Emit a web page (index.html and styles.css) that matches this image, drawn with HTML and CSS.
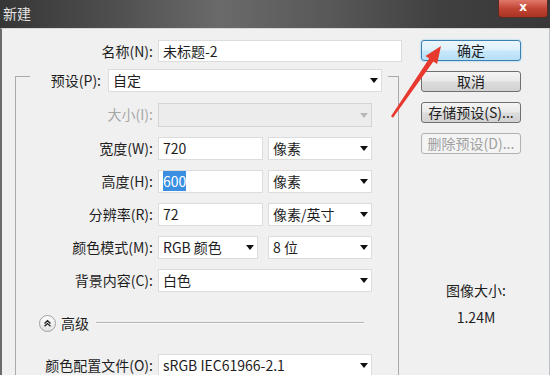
FILE: index.html
```html
<!DOCTYPE html>
<html lang="zh-CN">
<head>
    <meta charset="UTF-8">
    <title>新建</title>
    <link rel="stylesheet" href="styles.css">
</head>
<body>
    <div class="window">
        <div class="titlebar">
            <span class="title">新建</span>
            <div class="close-btn">x</div>
        </div>

        <div class="content">
            <div class="form">
                <div class="name-row">
                    <label>名称(N):</label>
                    <div class="field">未标题-2</div>
                </div>

                <div class="group">
                    <div class="preset-row">
                        <label>预设(P):</label>
                        <div class="select wide">自定<span class="caret"></span></div>
                    </div>

                    <div class="group-grid">
                        <label class="disabled">大小(I):</label>
                        <div class="select span disabled-box tall"><span></span><span class="caret light"></span></div>

                        <label>宽度(W):</label>
                        <div class="field">720</div>
                        <div class="select">像素<span class="caret"></span></div>

                        <label>高度(H):</label>
                        <div class="field"><span class="selected">600</span></div>
                        <div class="select">像素<span class="caret"></span></div>

                        <label>分辨率(R):</label>
                        <div class="field">72</div>
                        <div class="select">像素/英寸<span class="caret"></span></div>

                        <label>颜色模式(M):</label>
                        <div class="select narrow">RGB 颜色<span class="caret"></span></div>
                        <div class="select">8 位<span class="caret"></span></div>

                        <label>背景内容(C):</label>
                        <div class="select span">白色<span class="caret"></span></div>

                        <div class="advanced">
                            <span class="adv-icon">
                                <svg width="15" height="15" viewBox="0 0 15 15">
                                    <path d="M4.5 7.5 L7.5 4.8 L10.5 7.5 M4.5 10.3 L7.5 7.6 L10.5 10.3" fill="none" stroke="#222" stroke-width="1.4"/>
                                </svg>
                            </span>
                            <span class="adv-text">高级</span>
                            <span class="adv-line"></span>
                        </div>

                        <label>颜色配置文件(O):</label>
                        <div class="select span">sRGB IEC61966-2.1<span class="caret"></span></div>
                    </div>
                </div>
            </div>

            <div class="side">
                <div class="btn primary">确定</div>
                <div class="btn">取消</div>
                <div class="btn">存储预设(S)...</div>
                <div class="btn disabled">删除预设(D)...</div>

                <div class="info">
                    <div>图像大小:</div>
                    <div class="info-value">1.24M</div>
                </div>
            </div>
        </div>

        <svg class="arrow" width="550" height="375" viewBox="0 0 550 375">
            <polygon points="391.0,116.3 429.2,58.6 425.5,56.0 441,46 437.1,64.0 433.4,61.4 393.0,117.7" fill="#e8392f"/>
        </svg>
    </div>
</body>
</html>
```

FILE: styles.css
```css
body {
    margin: 0;
    padding: 0;
    font-family: "Noto Sans CJK SC", "Liberation Sans", sans-serif;
    font-size: 14px;
    color: #1e1e1e;
    overflow: hidden;
}

.window {
    position: relative;
    width: 550px;
    height: 375px;
    overflow: hidden;
}

.titlebar {
    height: 28px;
    display: flex;
    justify-content: space-between;
    align-items: flex-start;
    background: linear-gradient(90deg, #363636 0%, #4e4e4e 20%, #6a6a6a 40%, #585858 60%, #404040 80%, #383838 100%);
}

.title {
    color: #e4e4e4;
    line-height: 26px;
    padding-left: 3px;
}

.close-btn {
    width: 48px;
    height: 17px;
    margin-right: 2px;
    border: 1px solid #5a2a24;
    border-top: none;
    border-radius: 0 0 4px 4px;
    background: linear-gradient(#e0796b, #c24534 50%, #a93323);
    color: #fff;
    font-family: "DejaVu Sans", sans-serif;
    font-weight: bold;
    font-size: 12px;
    line-height: 14px;
    text-align: center;
}

.content {
    display: flex;
    height: 347px;
    background-color: #f0f0f0;
    border-left: 2px solid #6b6b6b;
    border-right: 1px solid #b9c2ca;
    border-top: 1px solid #d8d8d8;
    box-sizing: border-box;
}

.form {
    width: 408px;
    flex-shrink: 0;
}

label {
    text-align: right;
    line-height: 23px;
    white-space: nowrap;
}

label.disabled {
    color: #a8a8a8;
}

.name-row {
    display: grid;
    grid-template-columns: 151px 244px;
    column-gap: 5px;
    margin-top: 11px;
}

.field, .select {
    height: 23px;
    box-sizing: border-box;
    background-color: #fff;
    border: 1px solid #dcdcdc;
    padding-left: 4px;
    line-height: 21px;
    white-space: nowrap;
}

.name-row .field {
    height: 22px;
}

.select {
    display: flex;
    justify-content: space-between;
    align-items: center;
    padding-right: 3px;
}

.caret {
    width: 0;
    height: 0;
    border-top: 5px solid #111;
    border-left: 4px solid transparent;
    border-right: 4px solid transparent;
}

.caret.light {
    border-top-color: #b8b8b8;
}

.selected {
    background-color: #3b8fe2;
    color: #fff;
}

.group {
    margin: 13px 0 0 13px;
    width: 384px;
    height: 320px;
    box-sizing: border-box;
    border: 1px solid #a9a9a9;
    border-bottom: none;
}

.preset-row {
    display: flex;
    gap: 7px;
    margin: -8px 0 0 14px;
    width: 358px;
    box-sizing: border-box;
    padding-right: 6px;
    background-color: #f0f0f0;
}

.preset-row label {
    width: 71px;
}

.select.wide {
    width: 274px;
}

.group-grid {
    display: grid;
    grid-template-columns: 137px 105px 104px;
    column-gap: 5px;
    row-gap: 10px;
    margin-top: 11px;
}

.span {
    grid-column: 2 / 4;
}

.tall {
    height: 24px;
}

.disabled-box {
    background-color: #ececec;
    border-color: #d4d4d4;
}

.select.narrow {
    width: 100px;
}

.advanced {
    grid-column: 1 / 4;
    height: 42px;
    display: flex;
    align-items: center;
    padding-left: 23px;
}

.adv-icon {
    width: 15px;
    height: 15px;
    border-radius: 50%;
    border: 1px solid #a0a0a0;
    background: linear-gradient(#ffffff, #e2e2e2);
    display: flex;
}

.adv-text {
    margin-left: 5px;
}

.adv-line {
    width: 268px;
    height: 1px;
    margin-left: 7px;
    background-color: #b4b4b4;
    border-bottom: 1px solid #fafafa;
}

.side {
    padding: 11px 0 0 11px;
}

.btn {
    width: 100px;
    height: 21px;
    box-sizing: border-box;
    margin-bottom: 10px;
    border: 1px solid #707070;
    border-radius: 3px;
    background: linear-gradient(#f4f4f4 0%, #e9e9e9 48%, #dcdcdc 52%, #d2d2d2 100%);
    text-align: center;
    line-height: 19px;
    font-size: 14px;
}

.btn.primary {
    border-color: #3c7fb1;
    background: linear-gradient(#ecf6fc 0%, #dcf0fb 48%, #c8e8f9 52%, #b6dff6 100%);
    box-shadow: 0 0 2px #6fc1ee;
}

.btn.disabled {
    border-color: #adb2b5;
    background: #f4f4f4;
    color: #a0a0a0;
}

.info {
    width: 110px;
    margin-top: 126px;
    text-align: center;
    line-height: 20px;
}

.info-value {
    margin-top: 7px;
}

.arrow {
    position: absolute;
    top: 0;
    left: 0;
    pointer-events: none;
}
```
